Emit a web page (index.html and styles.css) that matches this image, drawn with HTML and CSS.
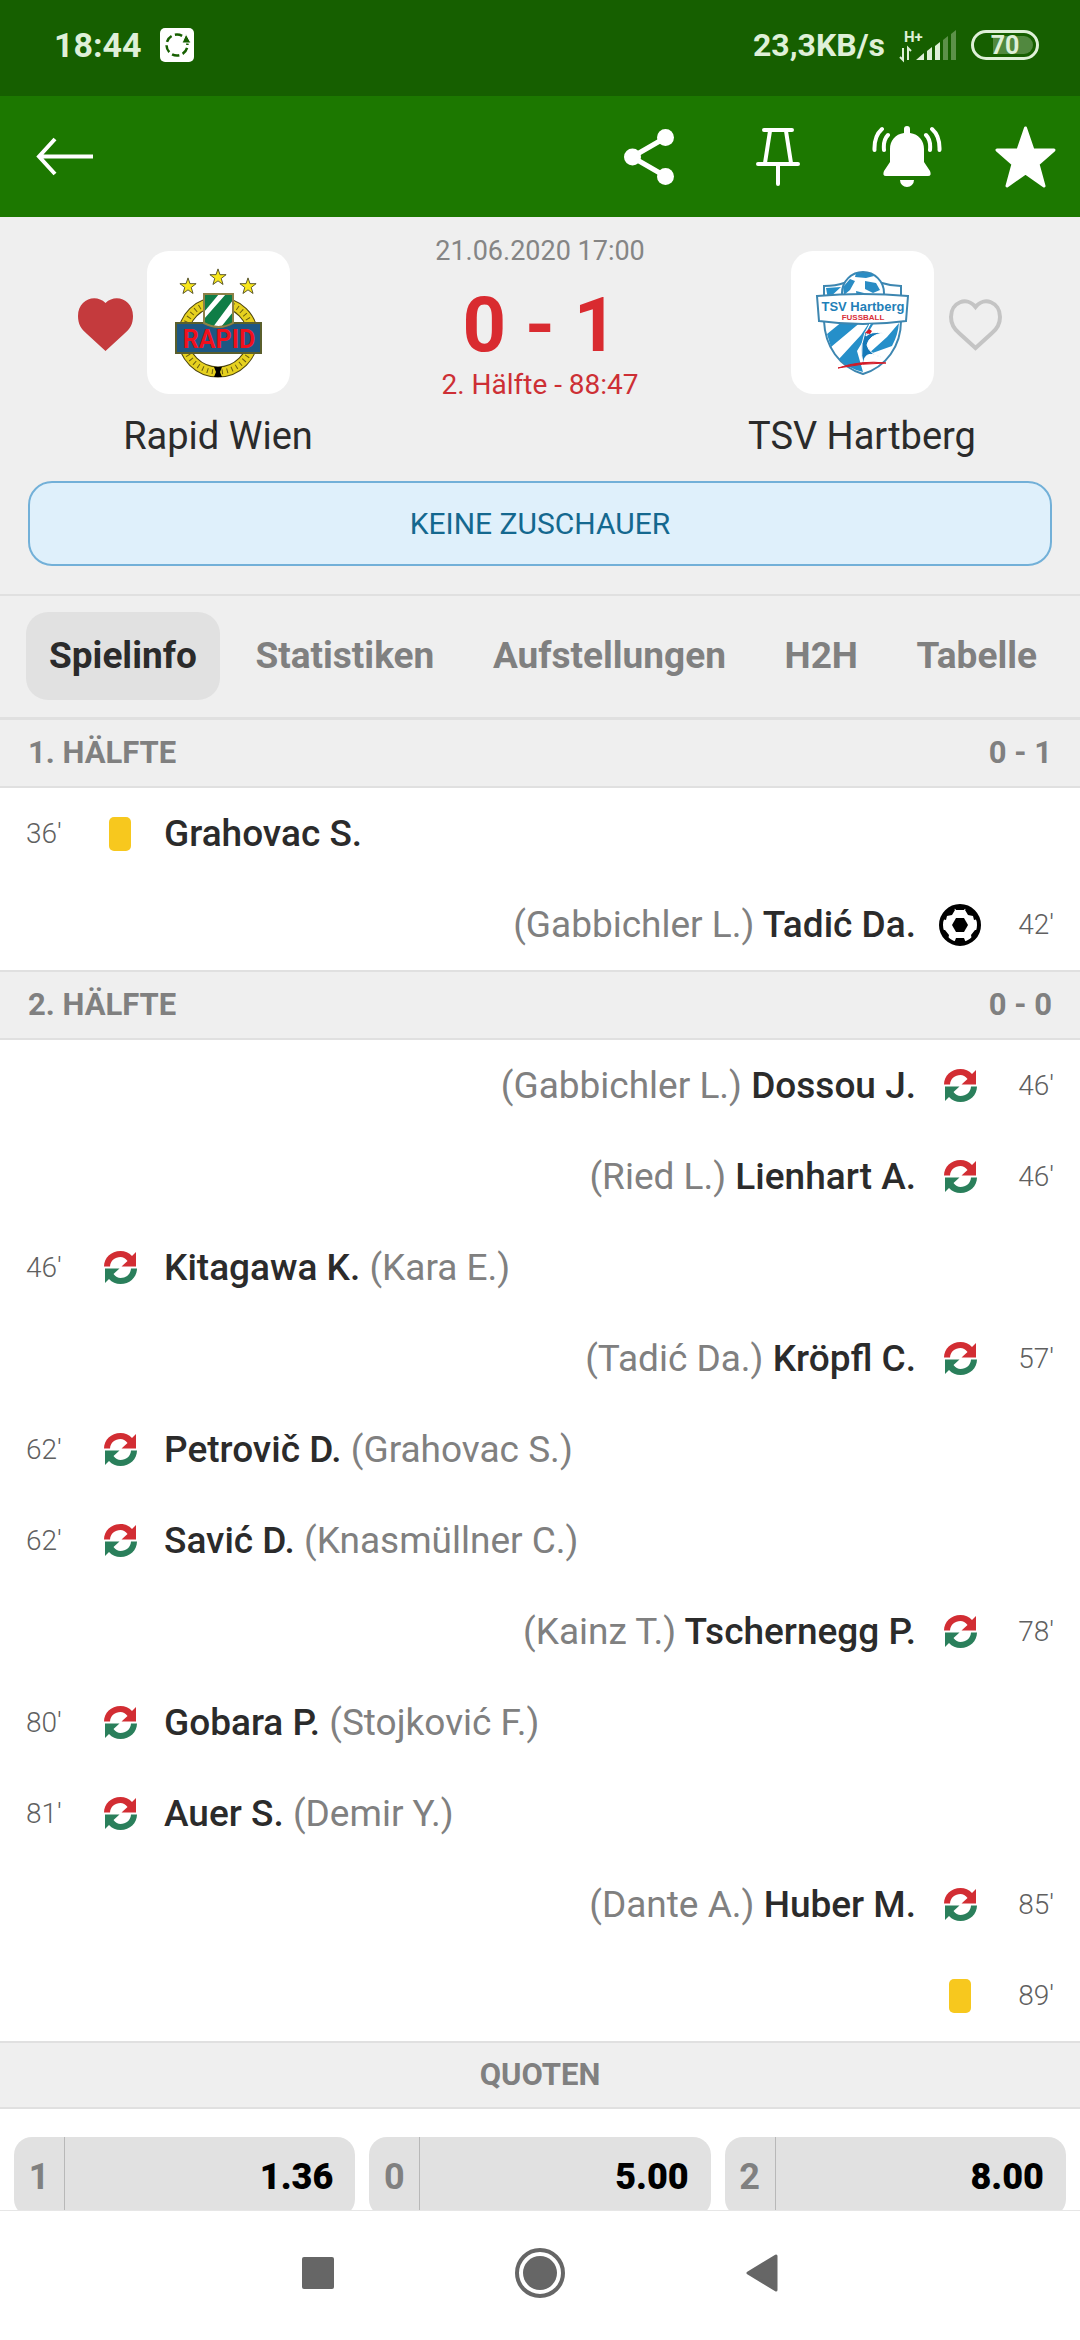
FILE: index.html
```html
<!DOCTYPE html>
<html lang="de">
<head>
  <meta charset="UTF-8">
  <title>Rapid Wien - TSV Hartberg</title>
  <meta name="viewport" content="width=device-width, initial-scale=1.0">
  <link rel="stylesheet" href="styles.css">
</head>
<body>

  <!-- Icons -->
  <svg class="defs" width="0" height="0">
    <symbol id="sub" viewBox="0 0 33 33">
      <path fill="#d22d33" d="M0 15.500C0 7 7 0 16.500 0C21 0 25 1.500 28 5L32 1V15.500H17.500L23.500 10C21.500 7.500 19 6 16.500 6C11 6 6.500 9.500 6 15.500z"/>
      <path fill="#2a7f5b" transform="rotate(180 16.500 16.500)" d="M0 15.500C0 7 7 0 16.500 0C21 0 25 1.500 28 5L32 1V15.500H17.500L23.500 10C21.500 7.500 19 6 16.500 6C11 6 6.500 9.500 6 15.500z"/>
    </symbol>
    <symbol id="ball" viewBox="0 0 42 42">
      <circle cx="21" cy="21" r="19" fill="#fff" stroke="#000" stroke-width="4"/>
      <path d="M17 14h8l4 7-4 7h-8l-4-7z"/>
      <path d="M15 3h12l-2 3h-8zM5 10l9-7 2 3-3 5-5 1-1 4-4-1zM37 10l-9-7-2 3 3 5 5 1 1 4 4-1zM3 26l3 0 4 5-1 5-3-1zM39 26l-3 0-4 5 1 5 3-1zM15 39l2-5h8l2 5-6 2z"/>
    </symbol>
    <symbol id="star5" viewBox="0 0 20 20">
      <path d="M10 1l2.200 6.400H19l-5.400 4.200 2 6.700-5.600-4-5.600 4 2-6.700L1 7.400h6.800z" fill="#f8e71c" stroke="#4d4a20" stroke-width="1"/>
    </symbol>
  </svg>

  <!-- Statusleiste -->
  <div class="status-bar">
    <span class="clock">18:44</span>
    <svg width="34" height="34" viewBox="0 0 34 34">
      <rect width="34" height="34" rx="5" fill="#fff"/>
      <circle cx="17" cy="17" r="10.500" fill="none" stroke="#165f00" stroke-width="2.500" stroke-dasharray="7.500 3.500" stroke-dashoffset="-3"/>
      <path d="M26 6l5 9h-9z" fill="#165f00" stroke="#fff" stroke-width="1"/>
    </svg>
    <span class="speed">23,3KB/s</span>
    <svg width="58" height="36" viewBox="0 -2 58 36">
      <text x="5" y="13" class="net">H+</text>
      <path d="M4 19v12L1 28M9 31V19l3 3" fill="none" stroke="#dff0d8" stroke-width="2"/>
      <path d="M17 31l8-7v7zM28 22l5-4v13h-5zM36 17l5-4v18h-5z" fill="#dff0d8"/>
      <path d="M44 11l5-4v24h-5zM52 5l5-4v30h-5z" fill="#5c9149"/>
    </svg>
    <svg width="68" height="30" viewBox="0 0 68 30">
      <rect x="1.500" y="1.500" width="65" height="27" rx="13.500" fill="none" stroke="#dff0d8" stroke-width="3"/>
      <path d="M22 6h31a9 9 0 0 1 0 18H22z" fill="#51883f"/>
      <text x="34" y="24" text-anchor="middle" class="battery">70</text>
    </svg>
  </div>

  <header class="app-bar">
    <button class="back" aria-label="Zurück">
      <svg width="57" height="39" viewBox="0 0 57 39">
        <path d="M19 2L3 19.500L19 37M3 19.500H57" fill="none" stroke="#fff" stroke-width="4"/>
      </svg>
    </button>
    <button aria-label="Teilen">
      <svg width="50" height="56" viewBox="0 0 50 56">
        <path d="M41 9L8 28L41 47" fill="none" stroke="#fff" stroke-width="5"/>
        <g fill="#fff"><circle cx="8.500" cy="28" r="8.500"/><circle cx="41.500" cy="8.500" r="8.500"/><circle cx="41.500" cy="47.500" r="8.500"/></g>
      </svg>
    </button>
    <button aria-label="Anheften">
      <svg width="44" height="58" viewBox="0 0 44 58">
        <path d="M8 2H36M2 36H42M22 36V56M14 3L9 35M30 3L35 35" fill="none" stroke="#fff" stroke-width="4" stroke-linecap="round"/>
      </svg>
    </button>
    <button aria-label="Benachrichtigungen">
      <svg width="70" height="62" viewBox="0 0 70 62">
        <path d="M32 7V3a3 3 0 0 1 6 0V7C47 8 52 15 52 23V36L58 45Q60 50 56 50H14Q10 50 12 45L18 36V23C18 15 23 8 32 7zM28 54H42A7 7 0 0 1 28 54z" fill="#fff"/>
        <path d="M10 3Q2 10 2.500 24M16 9Q11 14 12 24M60 3Q68 10 67.500 24M54 9Q59 14 58 24" fill="none" stroke="#fff" stroke-width="4" stroke-linecap="round"/>
      </svg>
    </button>
    <button class="fav" aria-label="Favorit">
      <svg width="61" height="62" viewBox="0 0 61 62">
        <path d="M30.500 2L38 24H59L43 38L49 60L30.500 47L12 60L18 38L2 24H23z" fill="#fff" stroke="#fff" stroke-width="3" stroke-linejoin="round"/>
      </svg>
    </button>
  </header>

  <main>
    <section class="match">
      <div class="teams">
        <div class="team">
          <button class="heart" aria-label="Rapid Wien folgen">
            <svg width="55" height="54" viewBox="0 0 55 54">
              <path d="M27.500 5C38-5 55 2 55 18C55 26 52 31 46 36L27.500 53L9 36C3 31 0 26 0 18C0 2 17-5 27.500 5z" fill="#c43a3d"/>
            </svg>
          </button>
          <div class="logo">
            <svg width="143" height="143" viewBox="0 0 143 143">
              <use href="#star5" x="32" y="26" width="18" height="18"/>
              <use href="#star5" x="62" y="17" width="18" height="18"/>
              <use href="#star5" x="92" y="26" width="18" height="18"/>
              <circle cx="71" cy="86" r="35" fill="none" stroke="#4d4510" stroke-width="11"/>
              <circle cx="71" cy="86" r="35" fill="none" stroke="#e6d11f" stroke-width="9"/>
              <circle cx="71" cy="86" r="35" fill="none" stroke="#6b5f12" stroke-width="5" stroke-dasharray="1 4"/>
              <path d="M67 116h8l-2 5 2 5h-8l2-5z"/>
              <path d="M57 43h29v30q-14 6-29 0z" fill="#fff"/>
              <path d="M57 43h15L57 61zM57 68L79 43h7v6L66 76l-9-3zM74 76l12-15v12z" fill="#0f7d46"/>
              <path d="M29 72h28q14 8 29 0h28v30H29z" fill="#1d5783" stroke="#5a5f2c" stroke-width="2"/>
              <path d="M57 43h29v29q-14 8-29 0z" fill="none" stroke="#8d8147" stroke-width="2"/>
              <text x="72" y="97" text-anchor="middle" class="rapid">RAPID</text>
            </svg>
          </div>
          <h2>Rapid Wien</h2>
        </div>

        <div class="result">
          <div class="date">21.06.2020 17:00</div>
          <div class="score">0 - 1</div>
          <div class="live">2. Hälfte - 88:47</div>
        </div>

        <div class="team away">
          <button class="heart" aria-label="TSV Hartberg folgen">
            <svg width="55" height="54" viewBox="0 0 55 54">
              <path d="M27.500 9C36-2 52 4 52 19C52 25 50 30 44 35L27.500 50L11 35C5 30 3 25 3 19C3 4 19-2 27.500 9z" fill="none" stroke="#c4c4c4" stroke-width="4"/>
            </svg>
          </button>
          <div class="logo">
            <svg width="143" height="143" viewBox="0 0 143 143">
              <path d="M33 35Q45 35 53 32H91Q100 35 110 35V70C110 95 95 116 72 123C48 116 34 95 33 70z" fill="#fff" stroke="#3d86b0" stroke-width="2"/>
              <path d="M35 37l15-1-13 12zM36 83L52 70H71L40 96zM48 108L70 84 78 72H83L66 100 72 121Q58 118 48 108zM108 72Q107 84 101 95L76 104 96 86z" fill="#258fc9"/>
              <circle cx="72" cy="42" r="21" fill="#fff" stroke="#3a87b4" stroke-width="2"/>
              <path d="M65 22l14 0 4 3-8 2-11-1zM52 36l7-8 5 2-5 9-6 5zM74 30l11 2 4 7-7 3-8-4zM65 40l8 2 0 5H66z" fill="#2a8cc4"/>
              <path d="M26 45Q72 41 117 45L115 70Q72 76 28 70z" fill="#fff" stroke="#3d86b0" stroke-width="2"/>
              <path d="M79 73Q66 90 73 118Q70 96 92 107Q78 103 76 94Q78 84 92 82Q80 80 75 85Q75 79 79 73z" fill="#1579b8" stroke="#fff" stroke-width="1"/>
              <path d="M74 82l4-4 3 2-2 3z" fill="#d31925"/>
              <path d="M47 117Q70 109 95 112Q72 112 47 117z" fill="#d31925" stroke="#d31925"/>
              <text x="72" y="60" text-anchor="middle" class="tsv">TSV Hartberg</text>
              <text x="72" y="69" text-anchor="middle" class="fussball">FUSSBALL</text>
            </svg>
          </div>
          <h2>TSV Hartberg</h2>
        </div>
      </div>
      <div class="notice">KEINE ZUSCHAUER</div>
    </section>

    <nav class="tabs">
      <a href="#spielinfo" class="active">Spielinfo</a>
      <a href="#statistiken">Statistiken</a>
      <a href="#aufstellungen">Aufstellungen</a>
      <a href="#h2h">H2H</a>
      <a href="#tabelle">Tabelle</a>
    </nav>

    <!-- Spielverlauf -->
    <h3 class="period first"><span>1. HÄLFTE</span><span>0 - 1</span></h3>
    <ul class="events">
      <li><time>36'</time><i><span class="card"></span></i><p>Grahovac S.</p></li>
      <li class="right"><time>42'</time><i><svg width="42" height="42"><use href="#ball"/></svg></i><p><span>(Gabbichler L.)</span> Tadić Da.</p></li>
    </ul>

    <h3 class="period"><span>2. HÄLFTE</span><span>0 - 0</span></h3>
    <ul class="events">
      <li class="right"><time>46'</time><i><svg width="33" height="33"><use href="#sub"/></svg></i><p><span>(Gabbichler L.)</span> Dossou J.</p></li>
      <li class="right"><time>46'</time><i><svg width="33" height="33"><use href="#sub"/></svg></i><p><span>(Ried L.)</span> Lienhart A.</p></li>
      <li><time>46'</time><i><svg width="33" height="33"><use href="#sub"/></svg></i><p>Kitagawa K. <span>(Kara E.)</span></p></li>
      <li class="right"><time>57'</time><i><svg width="33" height="33"><use href="#sub"/></svg></i><p><span>(Tadić Da.)</span> Kröpfl C.</p></li>
      <li><time>62'</time><i><svg width="33" height="33"><use href="#sub"/></svg></i><p>Petrovič D. <span>(Grahovac S.)</span></p></li>
      <li><time>62'</time><i><svg width="33" height="33"><use href="#sub"/></svg></i><p>Savić D. <span>(Knasmüllner C.)</span></p></li>
      <li class="right"><time>78'</time><i><svg width="33" height="33"><use href="#sub"/></svg></i><p><span>(Kainz T.)</span> Tschernegg P.</p></li>
      <li><time>80'</time><i><svg width="33" height="33"><use href="#sub"/></svg></i><p>Gobara P. <span>(Stojković F.)</span></p></li>
      <li><time>81'</time><i><svg width="33" height="33"><use href="#sub"/></svg></i><p>Auer S. <span>(Demir Y.)</span></p></li>
      <li class="right"><time>85'</time><i><svg width="33" height="33"><use href="#sub"/></svg></i><p><span>(Dante A.)</span> Huber M.</p></li>
      <li class="right"><time>89'</time><i><span class="card"></span></i></li>
    </ul>

    <h3 class="period center">QUOTEN</h3>
    <div class="odds">
      <button><span>1</span><b>1.36</b></button>
      <button><span>0</span><b>5.00</b></button>
      <button><span>2</span><b>8.00</b></button>
    </div>
  </main>

  <!-- Systemnavigation -->
  <footer class="sys-nav">
    <button aria-label="Letzte Apps"><svg width="32" height="32"><rect width="32" height="32" rx="2" fill="#666"/></svg></button>
    <button aria-label="Startseite">
      <svg width="50" height="50" viewBox="0 0 50 50">
        <circle cx="25" cy="25" r="23" fill="none" stroke="#666" stroke-width="4"/>
        <circle cx="25" cy="25" r="17" fill="#666"/>
      </svg>
    </button>
    <button aria-label="Zurück"><svg width="32" height="38" viewBox="0 0 32 38"><path d="M30 2V36L2 19z" fill="#666" stroke="#666" stroke-width="3" stroke-linejoin="round"/></svg></button>
  </footer>

</body>
</html>
```
FILE: styles.css
```css
* {
  box-sizing: border-box;
}

body {
  margin: 0;
  height: 100vh;
  display: flex;
  flex-direction: column;
  background: #fff;
  font-family: Roboto, "Noto Sans", sans-serif;
  color: #2b2b2b;
}

h2, h3, p, ul {
  margin: 0;
  padding: 0;
}

button {
  border: 0;
  padding: 0;
  background: none;
  font: inherit;
  color: inherit;
}

svg {
  display: block;
}

.defs {
  position: absolute;
}

/* Statusleiste */
.status-bar {
  flex: none;
  height: 96px;
  padding: 0 41px 6px 54px;
  display: flex;
  align-items: center;
  gap: 14px;
  background: #165f00;
  color: #dff0d8;
  font-size: 34px;
  font-weight: 700;
}

.clock {
  margin-right: 4px;
}

.speed {
  margin-left: auto;
  font-size: 32px;
}

.net {
  font-size: 15px;
  fill: #dff0d8;
}

.battery {
  font-size: 25px;
  fill: #dff0d8;
}

/* Kopfzeile */
.app-bar {
  flex: none;
  height: 121px;
  display: flex;
  background: #1c7800;
}

.app-bar button {
  width: 129px;
  display: flex;
  align-items: center;
  justify-content: center;
}

.app-bar .back {
  margin-right: auto;
}

.app-bar .fav {
  width: 109px;
}

main {
  flex: 1;
  min-height: 0;
  overflow: hidden;
}

/* Spielstand */
.match {
  padding-bottom: 28px;
  background: #efefef;
  border-bottom: 2px solid #e0e0e0;
}

.teams {
  display: grid;
  grid-template-columns: 1fr 208px 1fr;
}

.team {
  display: grid;
  grid-template-columns: 1fr 143px 1fr;
  padding-top: 34px;
}

.logo {
  grid-column: 2;
  grid-row: 1;
  height: 143px;
  border-radius: 22px;
  background: #fff;
}

.heart {
  grid-row: 1;
  align-self: center;
  justify-self: end;
  margin: 4px 14px 0;
}

.away .heart {
  grid-column: 3;
  justify-self: start;
}

.rapid {
  font-size: 25px;
  font-weight: 700;
  fill: #f0101c;
}

.tsv {
  font: bold 13px "Liberation Sans", sans-serif;
  fill: #1f7fb8;
}

.fussball {
  font: bold 8px "Liberation Sans", sans-serif;
  fill: #d9303a;
}

.team h2 {
  grid-column: 1 / -1;
  margin-top: 18px;
  line-height: 48px;
  font-size: 38px;
  font-weight: 400;
  text-align: center;
}

.result {
  display: flex;
  flex-direction: column;
  align-items: center;
  padding-top: 16px;
  white-space: nowrap;
}

.date,
.live {
  line-height: 36px;
}

.date {
  font-size: 27px;
  color: #858585;
}

.score {
  margin: 16px 0 2px;
  font-size: 76px;
  line-height: 80px;
  font-weight: 700;
  color: #d92b30;
}

.live {
  font-size: 28px;
  color: #cd2f35;
}

.notice {
  margin: 21px 28px 0;
  height: 85px;
  line-height: 81px;
  border: 2px solid #72b0d8;
  border-radius: 24px;
  background: #dff0fb;
  color: #14688f;
  font-size: 30px;
  text-align: center;
}

/* Tabs */
.tabs {
  display: flex;
  justify-content: space-between;
  padding: 16px 20px 17px 26px;
  background: #efefef;
  border-bottom: 3px solid #e0e0e0;
}

.tabs a {
  padding: 0 23px;
  line-height: 88px;
  border-radius: 22px;
  color: #808080;
  font-size: 37px;
  font-weight: 700;
  text-decoration: none;
}

.tabs .active {
  background: #e1e1e1;
  color: #2b2b2b;
}

/* Spielverlauf */
.period {
  display: flex;
  justify-content: space-between;
  padding: 0 28px;
  line-height: 66px;
  background: #efefef;
  border: solid #e0e0e0;
  border-width: 2px 0;
  color: #808080;
  font-size: 31px;
  font-weight: 700;
}

.period.first {
  border-top: 0;
}

.period.center {
  justify-content: center;
  line-height: 64px;
}

.events {
  list-style: none;
}

.events li {
  display: flex;
  align-items: center;
  height: 91px;
  padding: 0 26px;
}

.events .right {
  flex-direction: row-reverse;
}

.events time {
  width: 64px;
  font-size: 28px;
  font-weight: 300;
  color: #606060;
}

.right time {
  text-align: right;
}

.events i {
  width: 60px;
  display: flex;
  justify-content: center;
}

.events p {
  margin: 0 14px;
  font-size: 37px;
  font-weight: 500;
}

.events p span {
  color: #808080;
  font-weight: 400;
}

.card {
  width: 22px;
  height: 34px;
  border-radius: 5px;
  background: #f7c81e;
}

/* Quoten */
.odds {
  display: flex;
  gap: 14px;
  padding: 28px 14px;
}

.odds button {
  flex: 1;
  display: flex;
  align-items: center;
  justify-content: space-between;
  height: 80px;
  padding-right: 22px;
  border-radius: 18px;
  background: #e1e1e1;
  font-size: 36px;
  font-weight: 700;
  line-height: 80px;
}

.odds span {
  width: 51px;
  border-right: 1px solid #b8b8b8;
  color: #808080;
}

.odds b {
  color: #000;
}

/* Systemnavigation */
.sys-nav {
  flex: none;
  height: 130px;
  padding-bottom: 6px;
  display: flex;
  justify-content: center;
  background: #fff;
  border-top: 1px solid #e6e6e6;
}

.sys-nav button {
  width: 222px;
  display: flex;
  align-items: center;
  justify-content: center;
}
```
